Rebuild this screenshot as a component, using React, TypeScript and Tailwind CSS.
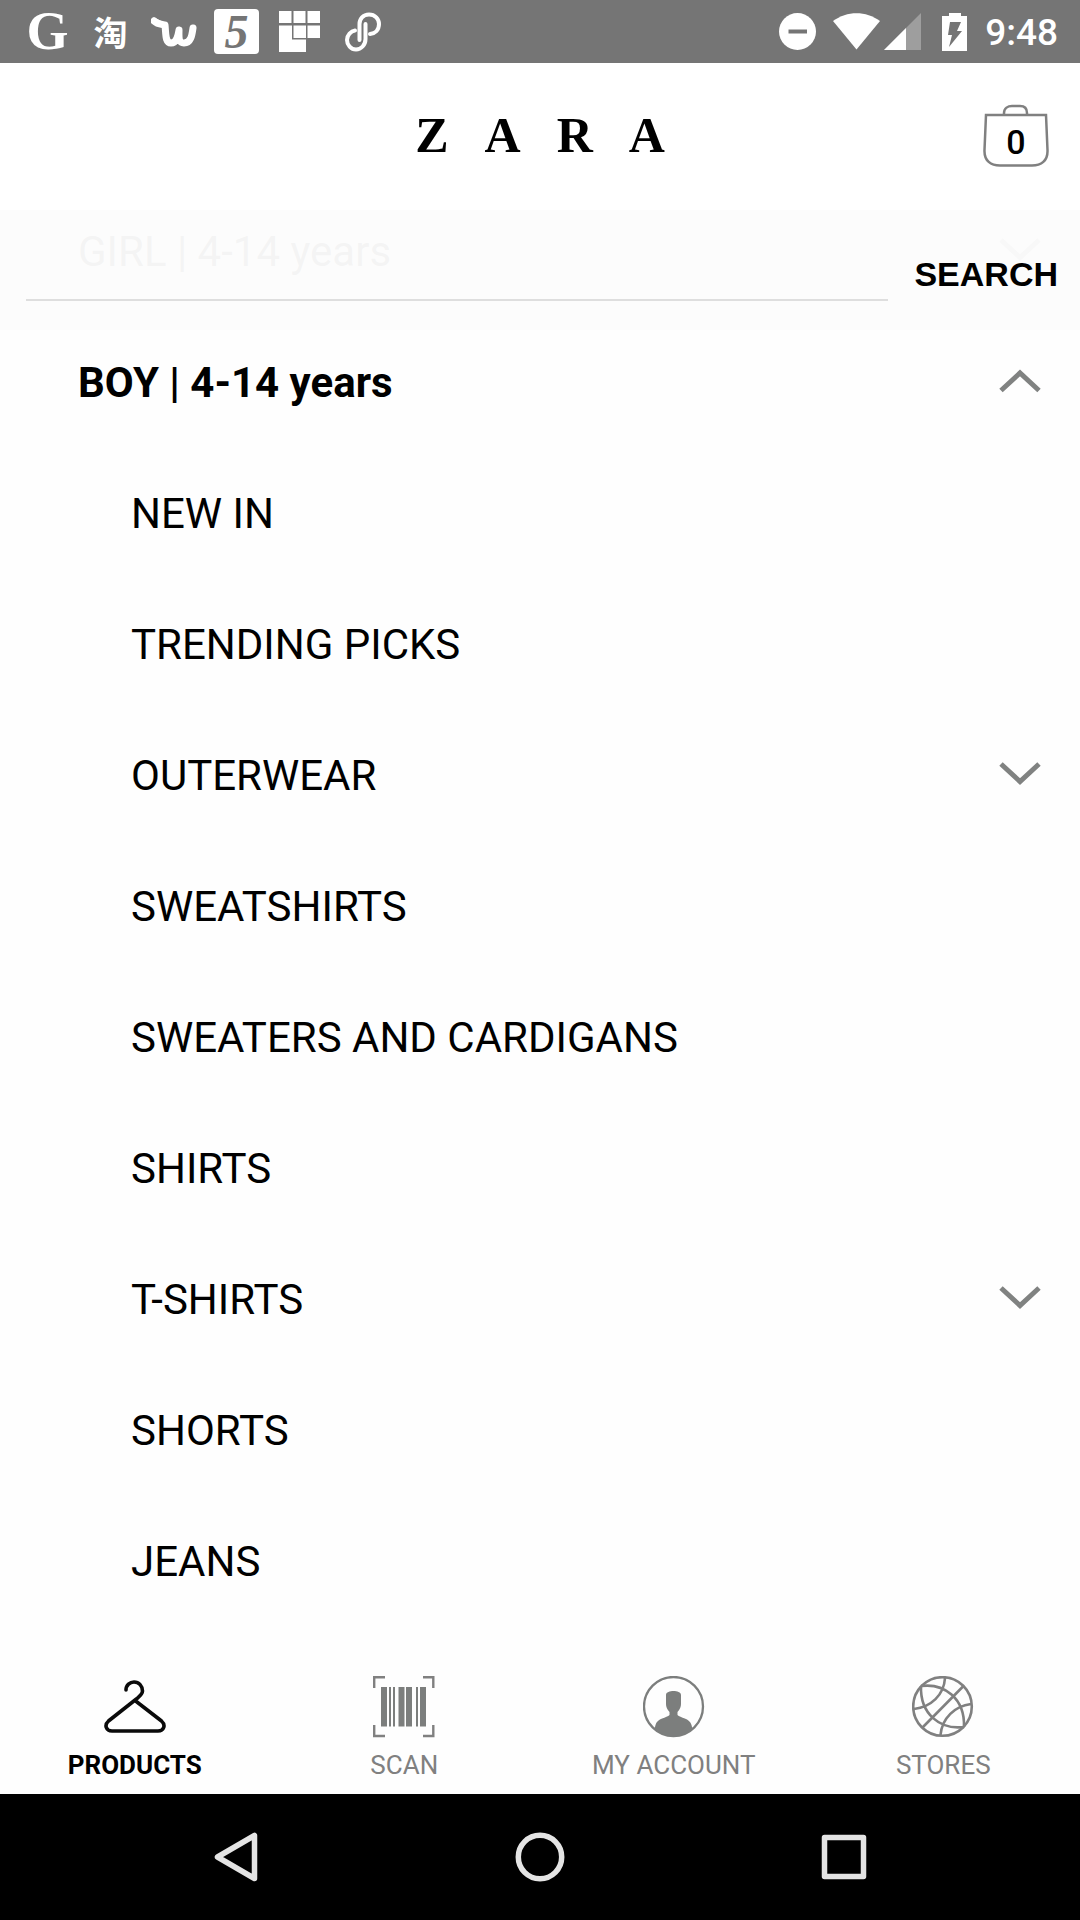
import React from "react";

type Item = { label: string; expandable?: boolean };

const items: Item[] = [
  { label: "NEW IN" },
  { label: "TRENDING PICKS" },
  { label: "OUTERWEAR", expandable: true },
  { label: "SWEATSHIRTS" },
  { label: "SWEATERS AND CARDIGANS" },
  { label: "SHIRTS" },
  { label: "T-SHIRTS", expandable: true },
  { label: "SHORTS" },
  { label: "JEANS" },
];

function Chevron({ up = false }: { up?: boolean }) {
  return (
    <svg className="mb-1" width="42" height="24" viewBox="0 0 42 24" fill="none" stroke="#808281" strokeWidth="5" aria-hidden="true">
      <path d={up ? "M2 21.5 21 4 40 21.5" : "M2 2 21 19.5 40 2"} />
    </svg>
  );
}

function StatusBar() {
  return (
    <div className="flex h-[63px] shrink-0 items-center justify-between bg-[#757575] pl-4 pr-[22px] text-white">
      <div className="flex items-center">
        <span className="flex w-[63px] justify-center font-['Liberation_Serif'] text-[54px] font-bold leading-[63px]">G</span>
        <span className="flex w-[63px] justify-center font-['Noto_Sans_CJK_SC',sans-serif] text-[34px] font-bold leading-[61px]">
          淘
        </span>
        <span className="flex w-[63px] justify-center">
          <svg width="46" height="46" viewBox="0 0 46 46" fill="none" stroke="#fff" strokeLinecap="round" strokeLinejoin="round" aria-hidden="true">
            <path d="M3 12C7 16 12 15 14 16 15 25 14 34 20 34 26 34 27 27 28 21 28 28 27 34 33 34 40 34 41 26 42 19" strokeWidth="7" />
            <path d="M3 11 14 17" strokeWidth="5" />
          </svg>
        </span>
        <span className="flex w-[63px] justify-center">
          <span className="flex size-[45px] items-center justify-center rounded bg-white font-['Liberation_Serif'] text-[48px] font-bold italic leading-[45px] text-[#757575]">
            5
          </span>
        </span>
        <span className="flex w-[63px] justify-center">
          <svg width="41" height="41" viewBox="0 0 41 41" fill="#fff" aria-hidden="true">
            <path d="M0 0h12.5v12H0zM14.5 0h12v12h-12zM28.5 0H41v12H28.5zM28.5 14.5H41V27H28.5zM14.5 14.5h12.500V27H14.500zM0 14.500h13V28.500H27V41H0z" />
          </svg>
        </span>
        <span className="flex w-[63px] justify-center">
          <svg width="36" height="40" viewBox="0 0 36 40" fill="none" stroke="#fff" strokeWidth="4" strokeLinecap="round" aria-hidden="true">
            <path d="M20.500 12V27C20.500 33 16 37.500 11 37.500 6 37.500 2 33 2 28 2 23 6 19 10 18.500" />
            <path d="M14.500 28V12C14.500 7 18 2.500 24 2.500 30 2.500 34 7 34 12 34 18 30 21.500 25 22" />
          </svg>
        </span>
      </div>
      <div className="flex items-center">
        <svg className="mr-[17px]" width="37" height="37" viewBox="0 0 37 37" aria-hidden="true">
          <circle cx="18.500" cy="18.500" r="18.500" fill="#fff" />
          <path d="M9.500 18.500H28" stroke="#757575" strokeWidth="4" />
        </svg>
        <svg className="mr-1" width="47" height="37" viewBox="0 0 47 37" fill="#fff" aria-hidden="true">
          <path d="M23.500 36.500 0 8C14-2.500 33-2.500 47 8z" />
        </svg>
        <svg className="mr-[21px]" width="37" height="37" viewBox="0 0 37 37" fill="#fff" aria-hidden="true">
          <path d="M37 0V37H0z" opacity=".3" />
          <path d="M22 15V37H0z" />
        </svg>
        <svg className="mr-[18px]" width="25" height="38" viewBox="0 0 25 38" aria-hidden="true">
          <path d="M7 0h12v3h6v35H0V3h7z" fill="#fff" />
          <path d="M8 9h11l-4 9h5L7 34l3-12H6z" fill="#757575" />
        </svg>
        <time className="pt-[3px] text-[37px] font-medium leading-[60px]">9:48</time>
      </div>
    </div>
  );
}

function Header() {
  return (
    <header className="relative z-20 flex h-[147px] shrink-0 items-center justify-center bg-white">
      <h1 className="flex gap-9 pb-1 font-['Liberation_Serif'] text-[50px] font-bold leading-[56px]" aria-label="ZARA">
        <span>Z</span>
        <span>A</span>
        <span>R</span>
        <span>A</span>
      </h1>
      <button type="button" aria-label="Shopping bag" className="absolute right-[31px] top-[41px] flex h-[64px] w-[66px] items-center justify-center">
        <svg className="absolute inset-0" width="66" height="64" viewBox="0 0 66 64" fill="none" stroke="#808080" strokeWidth="2.500" aria-hidden="true">
          <path d="M3 11H63L64.500 46C65 57 58 61.500 49 61.500H17C8 61.500 1 57 1.500 46zM21 11V9C21 4 25 2 29 2H37C41 2 44 4 44 9V11" />
        </svg>
        <span className="relative mt-3 text-[34px] font-medium leading-[40px]">0</span>
      </button>
    </header>
  );
}

function SearchBar() {
  return (
    <form className="absolute inset-x-0 top-0 z-10 flex h-[120px] items-center bg-[#fcfcfc]/97 pl-[26px] pr-[22px]" onSubmit={(e) => e.preventDefault()}>
      <input
        type="text"
        aria-label="Search products"
        className="h-[62px] min-w-0 flex-1 border-b-2 border-[#dedede] bg-transparent text-[34px] outline-none"
      />
      <button type="submit" className="ml-[26px] pt-2 font-['Liberation_Sans'] text-[34px] font-bold leading-[40px]">
        SEARCH
      </button>
    </form>
  );
}

const row = "flex h-[131px] w-full items-center justify-between pr-[39px] text-left";

function Catalog() {
  return (
    <ul className="-mt-6 text-[42px] leading-[48px]">
      <li>
        <button type="button" aria-expanded="false" className={`${row} pl-[78px]`}>
          GIRL | 4-14 years
          <Chevron />
        </button>
      </li>
      <li>
        <button type="button" aria-expanded="true" className={`${row} pl-[78px] font-bold`}>
          BOY | 4-14 years
          <Chevron up />
        </button>
        <ul>
          {items.map((item) => (
            <li key={item.label}>
              {item.expandable ? (
                <button type="button" aria-expanded="false" className={`${row} pl-[131px]`}>
                  {item.label}
                  <Chevron />
                </button>
              ) : (
                <a href="#" className={`${row} pl-[131px]`}>
                  {item.label}
                </a>
              )}
            </li>
          ))}
        </ul>
      </li>
    </ul>
  );
}

function HangerIcon() {
  return (
    <svg width="62" height="62" viewBox="0 0 62 62" fill="none" stroke="#0a0a0a" strokeWidth="3.600" strokeLinecap="round" aria-hidden="true">
      <path d="M22 14C22 9 26 6 30 6 35 6 38.500 10 38.500 15 38.500 18 36 20 33 22.500L4.500 45C0 49 2 55 8 55H54C60 55 62 49 57.500 45L31 24.500" />
    </svg>
  );
}

function BarcodeIcon() {
  return (
    <svg width="62" height="62" viewBox="0 0 62 62" fill="#7c7e7d" aria-hidden="true">
      <path d="M12 1.200H1.200V12M50 1.200H60.300V12M12 60H1.200V49M50 60H60.300V49" fill="none" stroke="#808080" strokeWidth="2.400" />
      <path d="M8 11h6v39.500H8zM16 11h2v39.500h-2zM20 11h2v39.500h-2zM25.500 11h6v39.500h-6zM33 11h6v39.500h-6zM43 11h2v39.500h-2zM47 11h6v39.500h-6z" />
    </svg>
  );
}

function AccountIcon() {
  return (
    <svg width="62" height="62" viewBox="0 0 62 62" aria-hidden="true">
      <circle cx="30.500" cy="30.500" r="29.500" fill="none" stroke="#7c7e7d" strokeWidth="2.300" />
      <path d="M23 19C23 16 27 15 30.500 15 34 15 38 16 38 19V28C38 31 37 33 34.500 36V39C37 42 47 42 48.500 49L49.500 53C40 62 21 62 11.500 53L12.500 49C14 42 24 42 26.500 39V36C24 33 23 31 23 28z" fill="#7c7e7d" />
    </svg>
  );
}

function GlobeIcon() {
  return (
    <svg width="62" height="62" viewBox="0 0 62 62" fill="none" stroke="#808080" strokeWidth="2.600" aria-hidden="true">
      <circle cx="30.500" cy="30.500" r="29.300" />
      <path d="M10.500 51.500 51 10.500M2 33C19 31 32 19 33 2M59 28C43 30 30 42 28.500 59M9 10C32 7 53 22 52 51M9 10C8 38 28 54 52 51" />
    </svg>
  );
}

const tabs = [
  { label: "PRODUCTS", Icon: HangerIcon, active: true },
  { label: "SCAN", Icon: BarcodeIcon, active: false },
  { label: "MY ACCOUNT", Icon: AccountIcon, active: false },
  { label: "STORES", Icon: GlobeIcon, active: false },
];

function TabBar() {
  return (
    <nav aria-label="Main" className="grid h-[140px] shrink-0 grid-cols-4 bg-[#fefefe] pr-[2px] pt-[22px]">
      {tabs.map(({ label, Icon, active }) => (
        <button
          key={label}
          type="button"
          className={`flex flex-col items-center gap-3 text-[26px] leading-[30px] ${active ? "font-bold text-black" : "text-[#808080]"}`}
        >
          <Icon />
          {label}
        </button>
      ))}
    </nav>
  );
}

function SystemNav() {
  return (
    <nav aria-label="System" className="flex h-[126px] shrink-0 items-center justify-center gap-[254px] bg-black">
      <button type="button" aria-label="Back">
        <svg width="50" height="50" viewBox="0 0 50 50" fill="none" stroke="#e4e4e4" strokeWidth="5.500" strokeLinejoin="round" aria-hidden="true">
          <path d="M6.500 25 43.500 3.500V46.500z" />
        </svg>
      </button>
      <button type="button" aria-label="Home">
        <svg width="50" height="50" viewBox="0 0 50 50" fill="none" stroke="#e4e4e4" strokeWidth="5.500" aria-hidden="true">
          <circle cx="25" cy="25" r="21.700" />
        </svg>
      </button>
      <button type="button" aria-label="Recent apps">
        <svg width="50" height="50" viewBox="0 0 50 50" fill="none" stroke="#e4e4e4" strokeWidth="5.500" strokeLinejoin="round" aria-hidden="true">
          <rect x="5.500" y="5.500" width="39" height="39" />
        </svg>
      </button>
    </nav>
  );
}

export default function App() {
  return (
    <div className="flex min-h-screen flex-col bg-[#fefefe] font-[Roboto,sans-serif] text-black">
      <StatusBar />
      <Header />
      <main className="relative flex-1">
        <SearchBar />
        <Catalog />
      </main>
      <TabBar />
      <SystemNav />
    </div>
  );
}
